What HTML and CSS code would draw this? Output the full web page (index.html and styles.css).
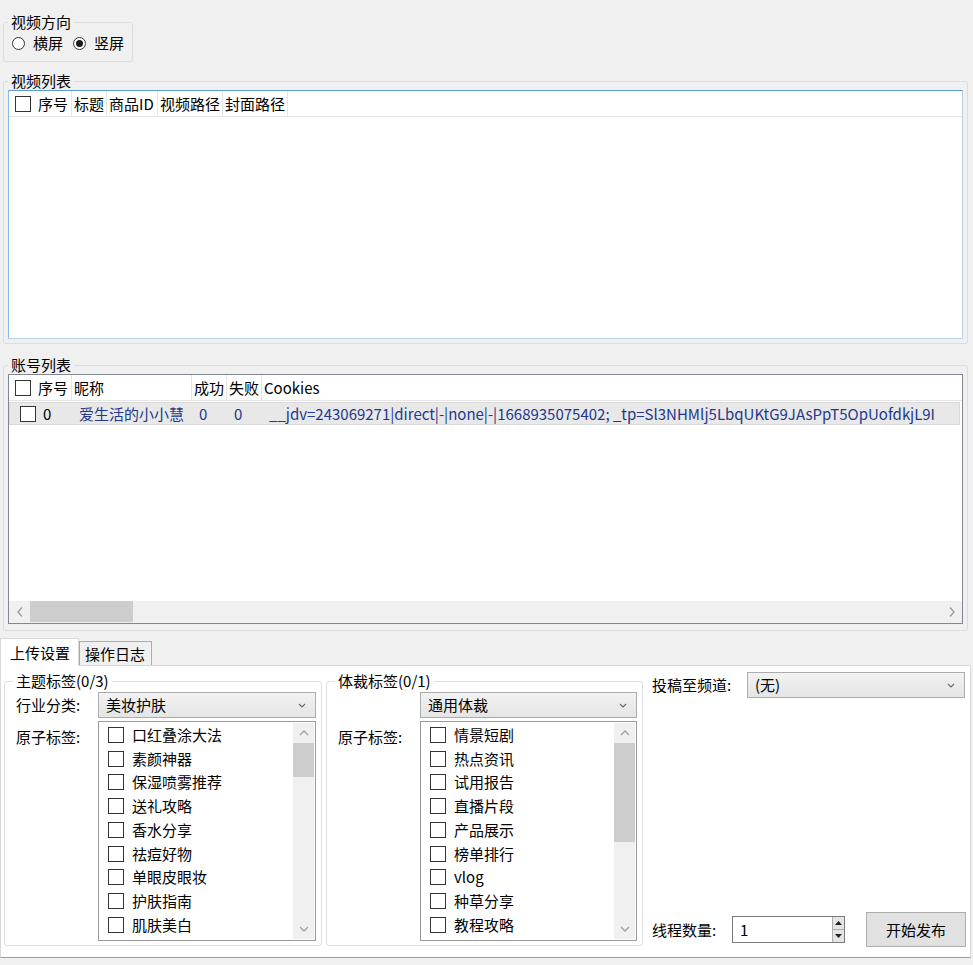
FILE: index.html
```html
<!DOCTYPE html>
<html lang="zh-CN">
<head>
    <meta charset="UTF-8">
    <title>视频发布</title>
    <link rel="stylesheet" href="styles.css">
</head>
<body>
<div class="app">
    <fieldset class="group orient">
        <legend>视频方向</legend>
        <div class="radio-row">
            <label class="radio"><span class="dot"></span>横屏</label>
            <label class="radio"><span class="dot checked"></span>竖屏</label>
        </div>
    </fieldset>

    <fieldset class="group video-group">
        <legend>视频列表</legend>
        <div class="listview focused">
            <div class="lv-head">
                <div class="col c-no"><span class="check"></span>序号</div>
                <div class="col c-title">标题</div>
                <div class="col c-goods">商品ID</div>
                <div class="col c-path">视频路径</div>
                <div class="col c-path">封面路径</div>
            </div>
            <div class="lv-body"></div>
        </div>
    </fieldset>

    <fieldset class="group account-group">
        <legend>账号列表</legend>
        <div class="listview">
            <div class="lv-head">
                <div class="col c-no"><span class="check"></span>序号</div>
                <div class="col c-nick">昵称</div>
                <div class="col c-num">成功</div>
                <div class="col c-num">失败</div>
                <div class="col c-cookie">Cookies</div>
            </div>
            <div class="lv-body">
                <div class="lv-row">
                    <div class="cell c-no"><span class="check"></span><span class="idx">0</span></div>
                    <div class="cell c-nick">爱生活的小小慧</div>
                    <div class="cell c-num">0</div>
                    <div class="cell c-num">0</div>
                    <div class="cell c-cookie">__jdv=243069271|direct|-|none|-|1668935075402; _tp=Sl3NHMlj5LbqUKtG9JAsPpT5OpUofdkjL9I</div>
                </div>
            </div>
            <div class="hscroll">
                <span class="arrow">
                    <svg width="6" height="10" viewBox="0 0 6 10"><path d="M5 0.5L1 5l4 4.5" fill="none" stroke="#9a9a9a" stroke-width="1.3"/></svg>
                </span>
                <span class="hthumb"></span>
                <span class="htrack"></span>
                <span class="arrow">
                    <svg width="6" height="10" viewBox="0 0 6 10"><path d="M1 0.5L5 5l-4 4.5" fill="none" stroke="#9a9a9a" stroke-width="1.3"/></svg>
                </span>
            </div>
        </div>
    </fieldset>

    <div class="tabs">
        <div class="tab-strip">
            <div class="tab active">上传设置</div>
            <div class="tab">操作日志</div>
        </div>
        <div class="panel">
            <fieldset class="tag-group">
                <legend>主题标签(0/3)</legend>
                <div class="field">
                    <span class="field-label">行业分类:</span>
                    <div class="combo">美妆护肤
                        <svg width="8" height="5" viewBox="0 0 8 5"><path d="M1 1l3 3 3-3" fill="none" stroke="#666" stroke-width="1.1"/></svg>
                    </div>
                </div>
                <div class="field top">
                    <span class="field-label">原子标签:</span>
                    <div class="checklist">
                        <div class="items">
                            <div class="item"><span class="check"></span>口红叠涂大法</div>
                            <div class="item"><span class="check"></span>素颜神器</div>
                            <div class="item"><span class="check"></span>保湿喷雾推荐</div>
                            <div class="item"><span class="check"></span>送礼攻略</div>
                            <div class="item"><span class="check"></span>香水分享</div>
                            <div class="item"><span class="check"></span>祛痘好物</div>
                            <div class="item"><span class="check"></span>单眼皮眼妆</div>
                            <div class="item"><span class="check"></span>护肤指南</div>
                            <div class="item"><span class="check"></span>肌肤美白</div>
                        </div>
                        <div class="vscroll">
                            <span class="varrow"><svg width="10" height="6" viewBox="0 0 10 6"><path d="M1 5l4-4 4 4" fill="none" stroke="#a0a0a0" stroke-width="1.3"/></svg></span>
                            <span class="vthumb short"></span>
                            <span class="vtrack"></span>
                            <span class="varrow"><svg width="10" height="6" viewBox="0 0 10 6"><path d="M1 1l4 4 4-4" fill="none" stroke="#a0a0a0" stroke-width="1.3"/></svg></span>
                        </div>
                    </div>
                </div>
            </fieldset>

            <fieldset class="tag-group">
                <legend>体裁标签(0/1)</legend>
                <div class="field">
                    <span class="field-label"></span>
                    <div class="combo">通用体裁
                        <svg width="8" height="5" viewBox="0 0 8 5"><path d="M1 1l3 3 3-3" fill="none" stroke="#666" stroke-width="1.1"/></svg>
                    </div>
                </div>
                <div class="field top">
                    <span class="field-label">原子标签:</span>
                    <div class="checklist">
                        <div class="items">
                            <div class="item"><span class="check"></span>情景短剧</div>
                            <div class="item"><span class="check"></span>热点资讯</div>
                            <div class="item"><span class="check"></span>试用报告</div>
                            <div class="item"><span class="check"></span>直播片段</div>
                            <div class="item"><span class="check"></span>产品展示</div>
                            <div class="item"><span class="check"></span>榜单排行</div>
                            <div class="item"><span class="check"></span>vlog</div>
                            <div class="item"><span class="check"></span>种草分享</div>
                            <div class="item"><span class="check"></span>教程攻略</div>
                        </div>
                        <div class="vscroll">
                            <span class="varrow"><svg width="10" height="6" viewBox="0 0 10 6"><path d="M1 5l4-4 4 4" fill="none" stroke="#a0a0a0" stroke-width="1.3"/></svg></span>
                            <span class="vthumb long"></span>
                            <span class="vtrack"></span>
                            <span class="varrow"><svg width="10" height="6" viewBox="0 0 10 6"><path d="M1 1l4 4 4-4" fill="none" stroke="#a0a0a0" stroke-width="1.3"/></svg></span>
                        </div>
                    </div>
                </div>
            </fieldset>

            <div class="side">
                <div class="field">
                    <span class="field-label wide">投稿至频道:</span>
                    <div class="combo">(无)
                        <svg width="8" height="5" viewBox="0 0 8 5"><path d="M1 1l3 3 3-3" fill="none" stroke="#666" stroke-width="1.1"/></svg>
                    </div>
                </div>
                <div class="run-row">
                    <span class="field-label">线程数量:</span>
                    <div class="spin">
                        <span class="spin-value">1</span>
                        <div class="spin-buttons">
                            <span class="spin-btn"><svg width="7" height="4" viewBox="0 0 7 4"><path d="M0 4L3.5 0 7 4z" fill="#222"/></svg></span>
                            <span class="spin-btn"><svg width="7" height="4" viewBox="0 0 7 4"><path d="M0 0h7L3.5 4z" fill="#222"/></svg></span>
                        </div>
                    </div>
                    <button class="btn">开始发布</button>
                </div>
            </div>
        </div>
    </div>
</div>
</body>
</html>
```

FILE: styles.css
```css
* {
    margin: 0;
    padding: 0;
    box-sizing: border-box;
}

body {
    background-color: #f0f0f0;
    color: #000;
    font-family: "Noto Sans CJK SC", "Noto Sans", sans-serif;
    font-size: 15px;
    line-height: 18px;
}

/* group boxes */
.group {
    border: 1px solid #dcdcdc;
    border-radius: 3px;
    margin: 0 5px 0 3px;
    padding: 0 4px;
    min-width: 0;
}

.group legend,
.tag-group legend {
    padding: 0 3px;
    line-height: 18px;
}

.orient {
    width: 130px;
    margin-top: 13px;
    padding: 3px 0 9px 4px;
}

.radio-row {
    display: flex;
    align-items: center;
    height: 18px;
    padding-left: 4px;
    white-space: nowrap;
}

.radio {
    display: flex;
    align-items: center;
    margin-right: 10px;
    flex-shrink: 0;
}

.dot {
    width: 13px;
    height: 13px;
    border: 1px solid #333;
    border-radius: 50%;
    background-color: #fff;
    margin-right: 8px;
    flex-shrink: 0;
    display: flex;
    align-items: center;
    justify-content: center;
}

.dot.checked::after {
    content: "";
    width: 7px;
    height: 7px;
    border-radius: 50%;
    background-color: #1a1a1a;
}

.video-group {
    margin-top: 10px;
    padding-bottom: 4px;
}

.account-group {
    margin-top: 12px;
    padding-bottom: 6px;
}

/* list views */
.listview {
    height: 249px;
    background-color: #fff;
    border: 1px solid #828790;
    display: flex;
    flex-direction: column;
    overflow: hidden;
}

.account-group .listview {
    height: 250px;
}

.listview.focused {
    border-color: #5b9bd5 #b6d3ec #b6d3ec #8fbadf;
}

.lv-head {
    display: flex;
    height: 26px;
    border-bottom: 1px solid #e5e5e5;
    flex-shrink: 0;
}

.col {
    display: flex;
    align-items: center;
    padding-left: 2px;
    border-right: 1px solid #e5e5e5;
    white-space: nowrap;
}

.col.c-no {
    width: 63px;
    padding-left: 6px;
}

.c-title { width: 35px; }
.c-goods { width: 51px; }
.c-path { width: 65px; }
.c-nick { width: 120px; }
.c-num { width: 35px; }

.col.c-cookie {
    border-right: none;
}

.check {
    width: 16px;
    height: 16px;
    border: 1px solid #333;
    background-color: #fff;
    margin-right: 7px;
    flex-shrink: 0;
}

.lv-body {
    flex: 1;
}

.lv-row {
    display: flex;
    height: 23px;
    margin: 1px 2px 0 0;
    background-color: #e8e8e8;
    border: 1px solid #d9d9d9;
    color: #24398c;
    white-space: nowrap;
    overflow: hidden;
}

.cell {
    display: flex;
    align-items: center;
    padding-left: 7px;
    flex-shrink: 0;
}

.cell.c-no {
    width: 62px;
    padding-left: 10px;
}

.cell.c-no .idx {
    color: #000;
}

.cell.c-cookie {
    flex-shrink: 1;
    min-width: 0;
    overflow: hidden;
}

.hscroll {
    height: 22px;
    display: flex;
    background-color: #f0f0f0;
    flex-shrink: 0;
}

.hscroll .arrow {
    width: 21px;
    display: flex;
    align-items: center;
    justify-content: center;
}

.hthumb {
    width: 103px;
    margin: 0 0 1px;
    background-color: #cdcdcd;
}

.htrack {
    flex: 1;
}

/* tabs */
.tabs {
    margin: 7px 2px 0 0;
}

.tab-strip {
    display: flex;
    align-items: flex-end;
    height: 27px;
}

.tab {
    height: 24px;
    padding: 0 6px 0 5px;
    border: 1px solid #acacac;
    border-bottom: none;
    background-color: #f0f0f0;
    display: flex;
    align-items: center;
}

.tab.active {
    height: 28px;
    margin-bottom: -1px;
    padding: 0 8px 0 9px;
    background-color: #fff;
    border-color: #d9d9d9;
    position: relative;
    z-index: 1;
}

.panel {
    height: 293px;
    background-color: #fff;
    border: 1px solid #d9d9d9;
    border-bottom-color: #9a9a9a;
    padding: 6px 4px 11px 3px;
    display: flex;
    gap: 4px;
}

.tag-group {
    width: 318px;
    border: 1px solid #dcdfe3;
    border-radius: 3px;
    padding: 0 5px 4px 11px;
    min-width: 0;
}

.tag-group + .tag-group {
    width: 317px;
}

.tag-group legend {
    margin-left: -3px;
}

.field {
    display: flex;
    align-items: center;
    margin-top: 2px;
}

.field.top {
    align-items: flex-start;
    margin-top: 3px;
}

.field-label {
    width: 82px;
    flex-shrink: 0;
}

.field.top .field-label {
    margin-top: 7px;
}

.field-label.wide {
    width: 95px;
}

.combo {
    width: 218px;
    height: 26px;
    border: 1px solid #acacac;
    background: linear-gradient(#f2f2f2, #e5e5e5);
    display: flex;
    align-items: center;
    justify-content: space-between;
    padding: 0 9px 0 7px;
}

.checklist {
    width: 218px;
    height: 220px;
    border: 1px solid #9a9a9a;
    display: flex;
}

.items {
    flex: 1;
    padding: 1px 0 0 9px;
}

.item {
    height: 23.75px;
    display: flex;
    align-items: center;
}

.item .check {
    margin-right: 8px;
}

.vscroll {
    width: 21px;
    margin: 1px;
    background-color: #f0f0f0;
    display: flex;
    flex-direction: column;
}

.varrow {
    height: 20px;
    display: flex;
    align-items: center;
    justify-content: center;
}

.vthumb {
    background-color: #cdcdcd;
    flex-shrink: 0;
}

.vthumb.short { height: 34px; }
.vthumb.long { height: 99px; }

.vtrack {
    flex: 1;
}

.side {
    flex: 1;
    display: flex;
    flex-direction: column;
    justify-content: space-between;
    padding-left: 5px;
}

.side .field {
    margin-top: 0;
}

.run-row {
    display: flex;
    align-items: center;
    margin-bottom: -1px;
}

.run-row .field-label {
    width: 80px;
}

.spin {
    width: 113px;
    height: 27px;
    border: 1px solid #7a7a7a;
    display: flex;
}

.spin-value {
    flex: 1;
    padding-left: 7px;
    display: flex;
    align-items: center;
}

.spin-buttons {
    width: 12px;
    display: flex;
    flex-direction: column;
    border-left: 1px solid #adadad;
}

.spin-btn {
    flex: 1;
    display: flex;
    align-items: center;
    justify-content: center;
    background-color: #e5e5e5;
    border-bottom: 1px solid #adadad;
}

.spin-btn:last-child {
    border-bottom: none;
}

.btn {
    margin-left: auto;
    width: 100px;
    height: 35px;
    border: 1px solid #adadad;
    background-color: #e1e1e1;
    font: inherit;
    color: #000;
}
```
